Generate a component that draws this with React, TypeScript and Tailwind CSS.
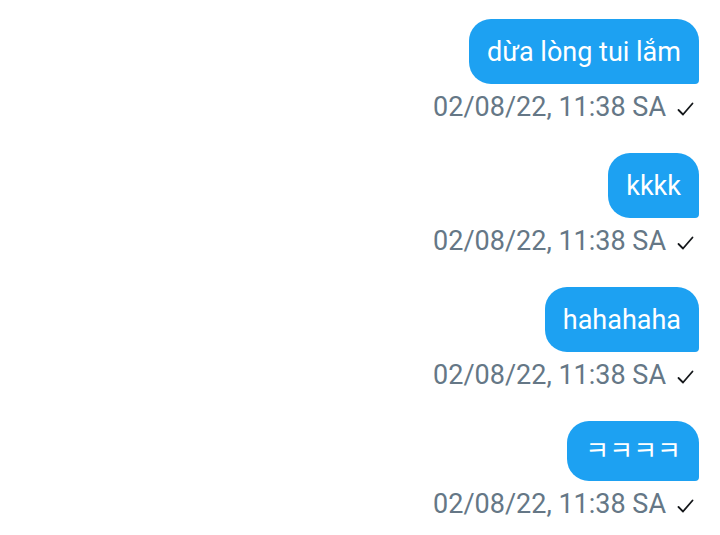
const messages = [
  { id: 1, text: "dừa lòng tui lắm", h: "h-[65px]", size: "text-[27px]" },
  { id: 2, text: "kkkk", h: "h-[65px]", size: "text-[27px]" },
  { id: 3, text: "hahahaha", h: "h-[65px]", size: "text-[27px]" },
  { id: 4, text: "ㅋㅋㅋㅋ", h: "h-[60px]", size: "text-[26px]" },
];

function Check() {
  return (
    <svg width="17" height="16" viewBox="0 0 17 16" fill="none" className="shrink-0 mt-[3px]">
      <path d="M1.5 9 L6 13.5 L15.5 2.5" stroke="#14171a" strokeWidth="1.8" strokeLinecap="round" strokeLinejoin="round" />
    </svg>
  );
}

export default function App() {
  return (
    <main
      className="w-[720px] h-[535px] bg-white overflow-hidden pt-[19px] pr-[21px]"
      style={{ fontFamily: "Roboto, 'Noto Sans CJK KR', sans-serif" }}
    >
      <div className="flex flex-col items-end">
        {messages.map((m) => (
          <div key={m.id} className="flex flex-col items-end mb-[32px]">
            <div
              className={`${m.h} ${m.size} flex items-center px-[18px] pt-[1px] bg-[#1da1f2] text-white rounded-[22px] rounded-br-[4px]`}
            >
              {m.text}
            </div>
            <div className="mt-[9px] h-[28px] flex items-center gap-[11px] pr-[5px] text-[27px] text-[#657786]">
              <span>02/08/22, 11:38 SA</span>
              <Check />
            </div>
          </div>
        ))}
      </div>
    </main>
  );
}
